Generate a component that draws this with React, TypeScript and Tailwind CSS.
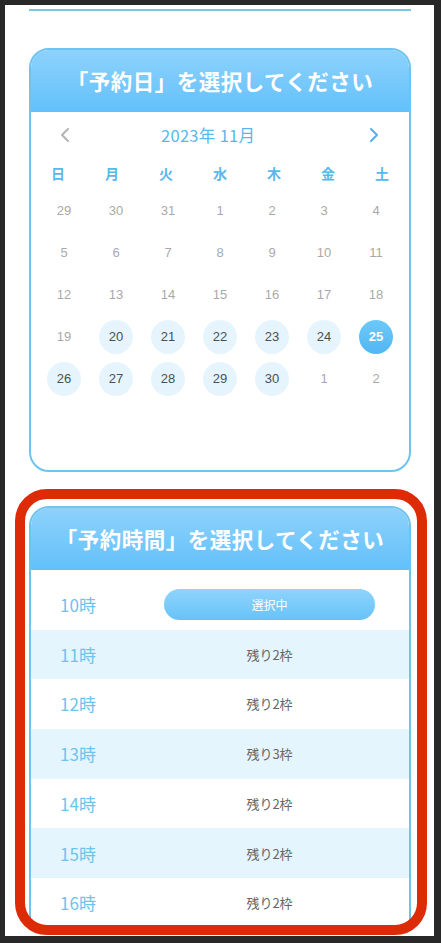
import React from "react";

const jp = "font-['Noto_Sans_CJK_JP',sans-serif]";
const num = "font-['Liberation_Sans','Noto_Sans_CJK_JP',sans-serif]";

type Day = { d: number; state: "off" | "open" | "selected" };

const days: Day[] = [
  ...[29, 30, 31].map((d) => ({ d, state: "off" as const })),
  ...Array.from({ length: 30 }, (_, i) => {
    const d = i + 1;
    if (d === 25) return { d, state: "selected" as const };
    if (d >= 20) return { d, state: "open" as const };
    return { d, state: "off" as const };
  }),
  { d: 1, state: "off" },
  { d: 2, state: "off" },
];

const weekdays = ["日", "月", "火", "水", "木", "金", "土"];

const slots = [
  { hour: 10, left: null },
  { hour: 11, left: 2 },
  { hour: 12, left: 2 },
  { hour: 13, left: 3 },
  { hour: 14, left: 2 },
  { hour: 15, left: 2 },
  { hour: 16, left: 2 },
];

function CardHeader({ title }: { title: string }) {
  return (
    <div className="h-[62px] bg-gradient-to-b from-[#8dd2fc] to-[#62c0fa] flex items-center justify-center">
      <h2 className={`${jp} text-white font-bold text-[21.5px] tracking-[0.5px]`}>
        {title}
      </h2>
    </div>
  );
}

function Calendar() {
  return (
    <section className="rounded-[20px] border-2 border-[#6cc4ef] overflow-hidden bg-white">
      <CardHeader title="「予約日」を選択してください" />
      <div className="pt-[11px] pb-[70px]">
        <div className="flex items-center h-[24px] pl-[26px] pr-[27px]">
          <svg width="16" height="16" viewBox="0 0 16 16" fill="none">
            <polyline
              points="11,2 5,8 11,14"
              stroke="#b3b3b3"
              strokeWidth="2"
              strokeLinecap="round"
              strokeLinejoin="round"
            />
          </svg>
          <span className={`${jp} ml-[88px] text-[16.5px] tracking-[0.3px] text-[#58b8ec]`}>
            2023年 11月
          </span>
          <svg className="ml-auto" width="16" height="16" viewBox="0 0 16 16" fill="none">
            <polyline
              points="5,2 11,8 5,14"
              stroke="#4fb2ea"
              strokeWidth="2"
              strokeLinecap="round"
              strokeLinejoin="round"
            />
          </svg>
        </div>
        <div className="grid grid-cols-7 mt-[14px] h-[24px] items-center">
          {weekdays.map((w) => (
            <span key={w} className={`${jp} text-center font-bold text-[14px] text-[#58b8ec]`}>
              {w}
            </span>
          ))}
        </div>
        <div className="grid grid-cols-7 px-[7px] mt-[5px]">
          {days.map((day, i) => (
            <div key={i} className="h-[42px] flex items-center justify-center">
              {day.state === "off" ? (
                <span className={`${num} text-[13px] text-[#a9a9a9]`}>{day.d}</span>
              ) : day.state === "open" ? (
                <span
                  className={`${num} w-[34px] h-[34px] rounded-full bg-[#e6f5fd] flex items-center justify-center text-[13px] text-[#4a4f56]`}
                >
                  {day.d}
                </span>
              ) : (
                <span
                  className={`${num} w-[34px] h-[34px] rounded-full bg-gradient-to-b from-[#6ccaf9] to-[#52b6f3] flex items-center justify-center text-[13px] font-bold text-white`}
                >
                  {day.d}
                </span>
              )}
            </div>
          ))}
        </div>
      </div>
    </section>
  );
}

function TimeList() {
  return (
    <section className="rounded-t-[20px] border-2 border-[#6cc4ef] overflow-hidden bg-white">
      <CardHeader title="「予約時間」を選択してください" />
      <div className="pt-[10px]">
        {slots.map((s, i) => (
          <div
            key={s.hour}
            className={`h-[49.7px] flex items-center ${i % 2 === 1 ? "bg-[#e5f5fd]" : "bg-white"}`}
          >
            <span className={`${jp} w-[133px] pl-[29px] text-[17px] text-[#6cc4ef]`}>
              {s.hour}時
            </span>
            <div className="w-[211px] flex justify-center">
              {s.left === null ? (
                <div
                  className={`${jp} w-[211px] h-[31px] rounded-full bg-gradient-to-b from-[#8fd4fc] to-[#66c2f8] flex items-center justify-center text-[12px] text-white`}
                >
                  選択中
                </div>
              ) : (
                <span className={`${jp} text-[13px] text-[#666]`}>残り{s.left}枠</span>
              )}
            </div>
          </div>
        ))}
      </div>
    </section>
  );
}

export default function App() {
  return (
    <div className="w-[441px] h-[943px] bg-[#282828] pl-[5px] pt-[5px] pr-[7px] pb-[7px]">
      <div className="relative w-full h-full bg-white overflow-hidden pl-[24px] pr-[23px] pt-[4px]">
        <div className="h-[2px] bg-[#7cc5e8]" />
        <div className="mt-[37px]">
          <Calendar />
        </div>
        <div className="mt-[34px]">
          <TimeList />
        </div>
        <div className="absolute left-[10px] top-[484px] w-[412px] h-[446px] border-[10px] border-[#dd2b08] rounded-[32px] pointer-events-none" />
      </div>
    </div>
  );
}
